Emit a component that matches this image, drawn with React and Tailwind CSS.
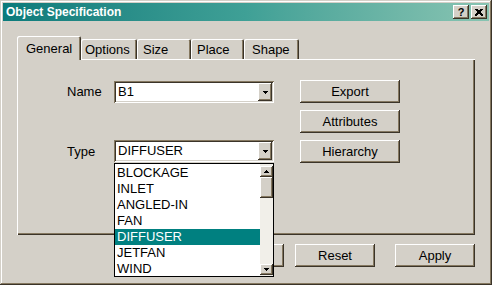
import React from "react";

const RAISED =
  "bg-[#d4d0c8] shadow-[inset_-1px_-1px_#3b3429,inset_1px_1px_#ffffff,inset_-2px_-2px_#857860,inset_2px_2px_#d4d0c8]";

function Arrow({ up = false }) {
  return (
    <svg width="5" height="3" viewBox="0 0 5 3" shapeRendering="crispEdges" className="block">
      {up ? (
        <g fill="#000">
          <rect x="2" y="0" width="1" height="1" />
          <rect x="1" y="1" width="3" height="1" />
          <rect x="0" y="2" width="5" height="1" />
        </g>
      ) : (
        <g fill="#000">
          <rect x="0" y="0" width="5" height="1" />
          <rect x="1" y="1" width="3" height="1" />
          <rect x="2" y="2" width="1" height="1" />
        </g>
      )}
    </svg>
  );
}

function Combo({ value, className = "", children }) {
  return (
    <div className={"relative w-[160px] " + className}>
      <div className="flex h-[22px] w-[160px] bg-white p-[2px] shadow-[inset_1px_1px_#857860,inset_-1px_-1px_#ffffff,inset_2px_2px_#3b3429,inset_-2px_-2px_#d4d0c8]">
        <div className="flex-1 pl-[2px] text-[13px] leading-[18px]">{value}</div>
        <div className={"flex h-[18px] w-[14px] items-center justify-center " + RAISED}>
          <Arrow />
        </div>
      </div>
      {children}
    </div>
  );
}

function Btn({ label, className = "" }) {
  return (
    <div className={"flex h-[23px] items-center justify-center text-[13px] " + RAISED + " " + className}>
      {label}
    </div>
  );
}

const TAB =
  "flex items-center bg-[#d4d0c8] text-[13px] leading-[15px] rounded-tl-[2px] rounded-tr-[2px] shadow-[inset_1px_1px_#ffffff,inset_-1px_0_#3b3429,inset_-2px_0_#857860]";

export default function App() {
  const items = ["BLOCKAGE", "INLET", "ANGLED-IN", "FAN", "DIFFUSER", "JETFAN", "WIND"];
  return (
    <div className="flex h-[285px] w-[492px] flex-col bg-[#d4d0c8] p-[3px] font-['Liberation_Sans',Arial,sans-serif] text-black shadow-[inset_-1px_-1px_#3b3429,inset_1px_1px_#d4d0c8,inset_-2px_-2px_#857860,inset_2px_2px_#ffffff]">
      {/* Title bar */}
      <div className="flex h-[18px] items-center justify-between bg-linear-to-r from-[#0a7b7b] via-[#3fa096] to-[#88c4b2] pl-[3px] pr-[2px]">
        <span className="text-[12px] font-bold leading-[14px] text-white">Object Specification</span>
        <div className="flex gap-[2px]">
          <div className={"flex h-[14px] w-[16px] items-center justify-center text-[11px] font-bold leading-[11px] " + RAISED}>
            ?
          </div>
          <div className={"flex h-[14px] w-[16px] items-center justify-center " + RAISED}>
            <svg width="8" height="7" viewBox="0 0 8 7" shapeRendering="crispEdges">
              <path d="M0.5 0 L7.5 7 M1.5 0 L8.5 7 M7.5 0 L0.5 7 M6.5 0 L-0.5 7" stroke="#000" strokeWidth="1" />
            </svg>
          </div>
        </div>
      </div>

      <div className="pl-[14px] pt-[15px]">
        {/* Tabs */}
        <div className="relative z-10 flex h-[24px] items-end">
          <div className={TAB + " h-[24px] w-[64px] pl-[9px]"}>General</div>
          <div className={TAB + " mb-px h-[20px] w-[56px] pl-[4px]"}>Options</div>
          <div className={TAB + " mb-px h-[20px] w-[54px] pl-[6px]"}>Size</div>
          <div className={TAB + " mb-px h-[20px] w-[53px] pl-[6px]"}>Place</div>
          <div className={TAB + " mb-px h-[20px] w-[55px] pl-[8px]"}>Shape</div>
        </div>

        {/* Panel */}
        <div className="-mt-px h-[176px] w-[458px] pl-[50px] pt-[21px] shadow-[inset_1px_1px_#ffffff,inset_-1px_-1px_#3b3429,inset_-2px_-2px_#857860]">
          <div className="grid grid-cols-[47px_186px_100px] grid-rows-[23px_23px_23px] gap-y-[7px]">
            <div className="flex items-center pt-px text-[13px]">Name</div>
            <Combo value="B1" className="self-end" />
            <Btn label="Export" />

            <div />
            <div />
            <Btn label="Attributes" />

            <div className="flex items-center text-[13px]">Type</div>
            <Combo value="DIFFUSER" className="self-start">
              <div className="absolute left-0 top-[23px] z-50 flex h-[114px] w-[160px] border border-black bg-white">
                <div className="flex-1 overflow-hidden pt-px">
                  {items.map((it) => (
                    <div
                      key={it}
                      className={
                        "h-[16px] pl-[2px] text-[13px] leading-[16px] " +
                        (it === "DIFFUSER" ? "bg-[#008080] text-white" : "")
                      }
                    >
                      {it}
                    </div>
                  ))}
                </div>
                <div className="flex w-[13px] flex-col bg-[#f1efe9] pb-px pt-[2px]">
                  <div className={"flex h-[11px] items-center justify-center " + RAISED}>
                    <Arrow up />
                  </div>
                  <div className={"h-[21px] " + RAISED} />
                  <div className="flex-1" />
                  <div className={"flex h-[11px] items-center justify-center " + RAISED}>
                    <Arrow />
                  </div>
                </div>
              </div>
            </Combo>
            <Btn label="Hierarchy" />
          </div>
        </div>

        {/* Bottom buttons */}
        <div className="mt-[9px] flex w-[458px] justify-end">
          <Btn label="OK" className="w-[80px]" />
          <Btn label="Reset" className="ml-[11px] w-[80px]" />
          <Btn label="Apply" className="ml-[20px] w-[80px]" />
        </div>
      </div>
    </div>
  );
}
